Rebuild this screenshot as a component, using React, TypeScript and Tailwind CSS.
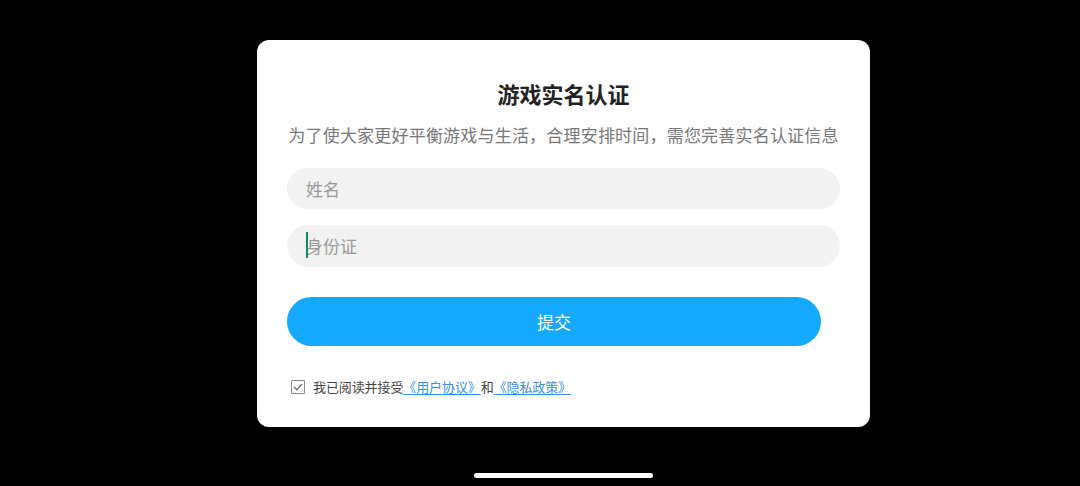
import React from "react";

export default function App() {
  const font = { fontFamily: '"Noto Sans CJK SC", "Noto Sans", sans-serif' };
  return (
    <div className="w-[1080px] h-[486px] bg-black relative overflow-hidden" style={font}>
      <div className="pl-[257px] pt-[40px]">
        <div className="w-[613px] h-[387px] bg-white rounded-[12px] px-[30px] pt-[38px] flex flex-col">
          <div className="text-center text-[22px] leading-[30px] font-bold text-[#222]">游戏实名认证</div>
          <div className="mt-[15px] text-center text-[17px] leading-[24px] text-[#777] whitespace-nowrap tracking-[0.2px]">
            为了使大家更好平衡游戏与生活，合理安排时间，需您完善实名认证信息
          </div>
          <div className="mt-[21px] h-[41px] w-[553px] rounded-full bg-[#f2f2f2] flex items-center pl-[19px]">
            <span className="text-[17px] text-[#999]">姓名</span>
          </div>
          <div className="mt-[16px] h-[42px] w-[553px] rounded-full bg-[#f2f2f2] flex items-center pl-[19px] relative">
            <span className="absolute left-[19px] top-[7px] w-[2px] h-[26px] bg-[#0f8a68]" />
            <span className="text-[17px] text-[#999]">身份证</span>
          </div>
          <button className="mt-[30px] h-[49px] w-[534px] rounded-full bg-[#14a9fd] text-white text-[17px] flex items-center justify-center">
            提交
          </button>
          <div className="mt-[31px] h-[20px] flex items-center pl-[4px]">
            <span className="w-[14px] h-[14px] border border-[#888] rounded-[1px] flex items-center justify-center">
              <svg width="10" height="8" viewBox="0 0 10 8" fill="none">
                <path d="M1 4 L4 6.8 L9 1" stroke="#666" strokeWidth="1.2" />
              </svg>
            </span>
            <span className="ml-[8px] text-[13px] text-[#444] whitespace-nowrap tracking-[-0.1px]">
              我已阅读并接受
              <span className="text-[#3a8de6] underline underline-offset-2">《用户协议》</span>
              和
              <span className="text-[#3a8de6] underline underline-offset-2">《隐私政策》</span>
            </span>
          </div>
        </div>
      </div>
      <div className="absolute left-[474px] top-[473px] w-[179px] h-[5px] rounded-full bg-white" />
    </div>
  );
}
